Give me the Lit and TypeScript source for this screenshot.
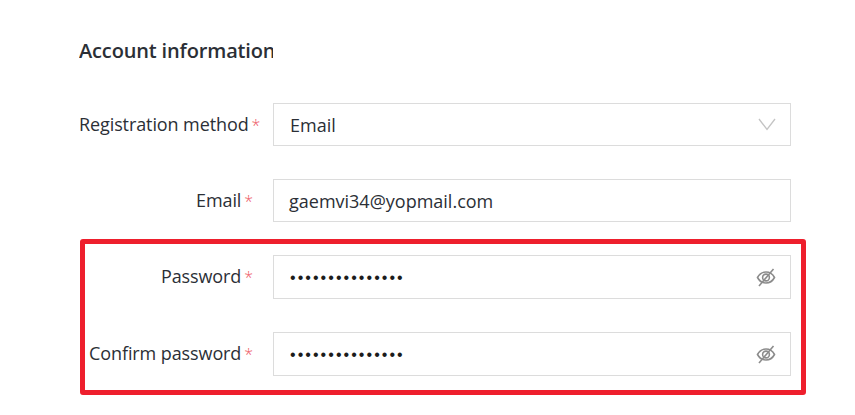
import { html, css, LitElement } from 'lit';
import { customElement } from 'lit/decorators.js';

const eye = html`
  <svg class="eye" width="22" height="22" viewBox="0 0 22 22" fill="none" stroke="#8c8c8c" stroke-width="1.600">
    <path d="M2.500 11.500C4.500 7.800 7.500 6 11 6s6.500 1.800 8.500 5.500C17.500 15.200 14.500 17 11 17s-6.500-1.800-8.500-5.500z"></path>
    <circle cx="11" cy="11.500" r="3.400"></circle>
    <path d="M18.500 3L4 20"></path>
  </svg>
`;

@customElement('app-root')
export class AppRoot extends LitElement {
  static styles = css`
    :host {
      display: block;
      position: relative;
      width: 855px;
      height: 415px;
      overflow: hidden;
      background: #ffffff;
      color: #2b2f36;
      font-family: 'Open Sans', 'Noto Sans', sans-serif;
    }

    .form {
      padding: 37px 0 0 79px;
    }

    h2 {
      width: 194px;
      height: 28px;
      margin: 0 0 38px;
      overflow: hidden;
      white-space: nowrap;
      font-size: 20px;
      line-height: 28px;
      font-weight: 600;
      letter-spacing: -0.15px;
    }

    .row {
      display: flex;
      align-items: center;
      gap: 20px;
      margin-bottom: 33px;
    }

    .label {
      flex: none;
      width: 174px;
      text-align: right;
      white-space: nowrap;
      font-size: 18px;
      letter-spacing: -0.1px;
      position: relative;
      top: -1px;
    }

    .star {
      color: #ee5a66;
      margin-left: 3px;
      font-size: 16px;
      font-weight: 300;
    }

    .field {
      display: flex;
      align-items: center;
      justify-content: space-between;
      box-sizing: border-box;
      width: 518px;
      height: 43px;
      border: 1px solid #dcdcdc;
      padding: 0 14px 0 16px;
      font-size: 18px;
    }

    .tall .field {
      height: 44px;
    }

    .plain {
      padding-left: 15px;
    }

    .dots {
      font-family: 'Liberation Sans', sans-serif;
      font-size: 16px;
      letter-spacing: 2.05px;
      color: #1c1c1c;
      padding: 2px 0 0 1px;
    }

    .eye {
      margin-right: -1px;
    }

    .highlight {
      position: absolute;
      left: 80px;
      top: 239px;
      width: 726px;
      height: 156px;
      box-sizing: border-box;
      border: 5px solid #ee1f2d;
      border-radius: 3px;
    }
  `;

  render() {
    return html`
      <div class="form">
        <h2>Account information</h2>
        <div class="row">
          <div class="label">Registration method<span class="star">*</span></div>
          <div class="field">
            <span>Email</span>
            <svg width="18" height="13" viewBox="0 0 18 13" fill="none" stroke="#c4c4c4" stroke-width="1.300">
              <path d="M1 1l8 10.500L17 1"></path>
            </svg>
          </div>
        </div>
        <div class="row">
          <div class="label">Email<span class="star">*</span></div>
          <div class="field plain">gaemvi34@yopmail.com</div>
        </div>
        <div class="row tall">
          <div class="label">Password<span class="star">*</span></div>
          <div class="field plain"><span class="dots">•••••••••••••••</span>${eye}</div>
        </div>
        <div class="row tall">
          <div class="label">Confirm password<span class="star">*</span></div>
          <div class="field plain"><span class="dots">•••••••••••••••</span>${eye}</div>
        </div>
      </div>
      <div class="highlight"></div>
    `;
  }
}
